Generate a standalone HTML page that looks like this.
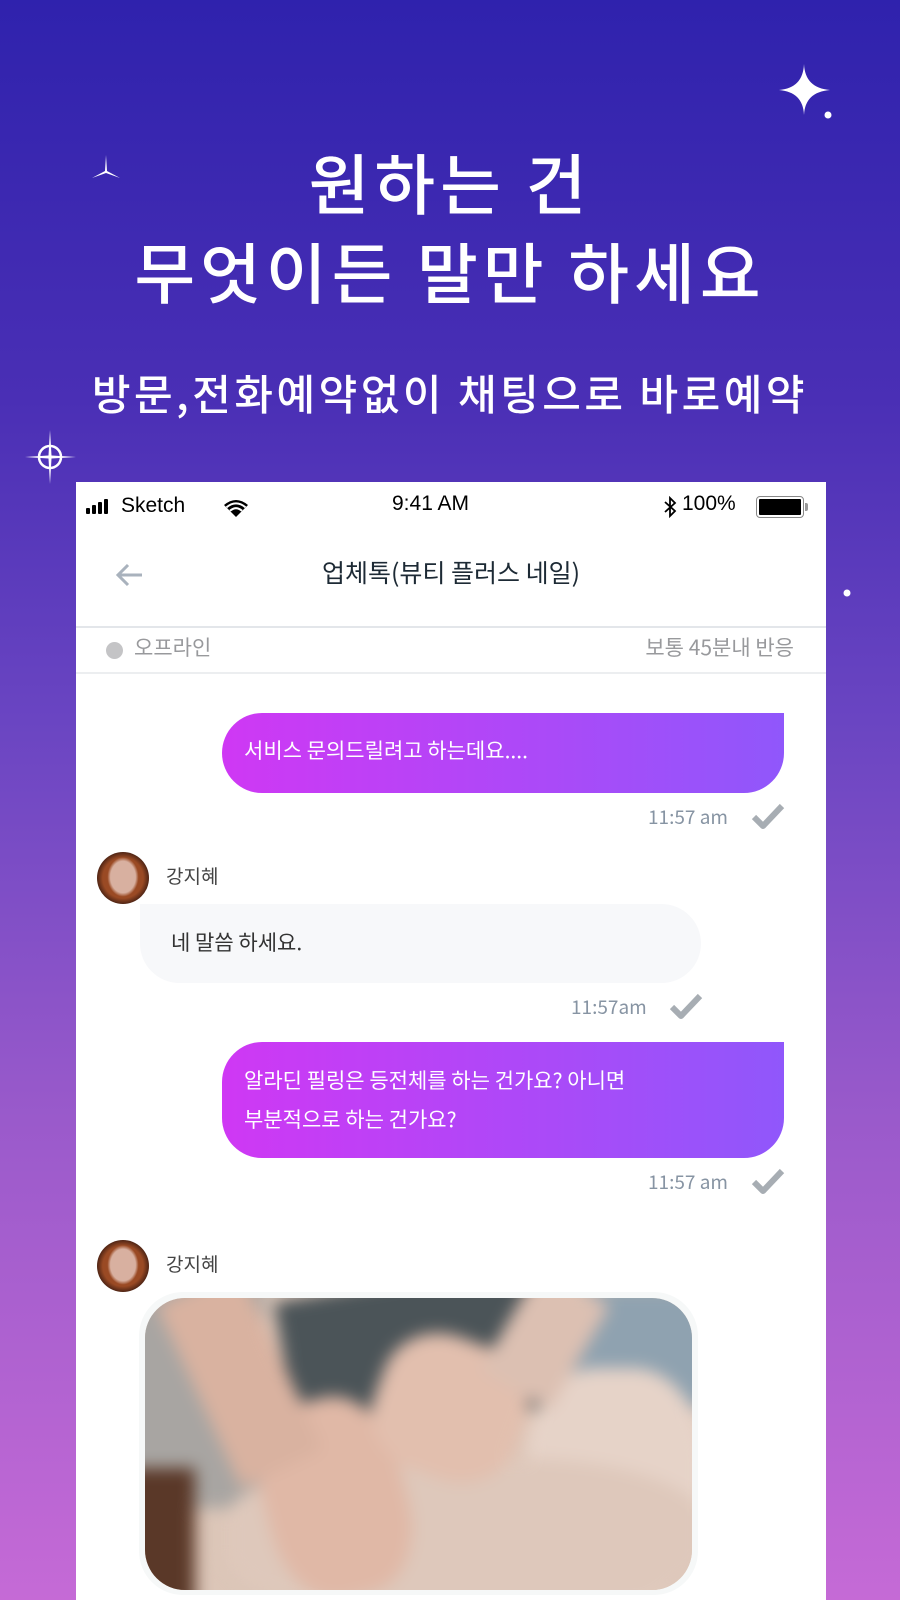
<!DOCTYPE html>
<html><head><meta charset="utf-8">
<style>
*{margin:0;padding:0;box-sizing:border-box}
html,body{width:900px;height:1600px;overflow:hidden}
body{position:relative;font-family:"Liberation Sans","Noto Sans CJK KR",sans-serif}
.bg{position:absolute;left:0;top:0;width:900px;height:1600px;background:linear-gradient(180deg,#2f22ad 0%,#4a2fb5 25%,#6a45c2 45%,#9a5acb 70%,#c56ad6 100%)}
.abs{position:absolute}
.t1{left:0;width:900px;text-align:center;color:#fff;font-family:"Noto Sans CJK KR",sans-serif;font-weight:500;font-size:66px;line-height:1;letter-spacing:5px}
.sub{left:0;width:900px;text-align:center;color:#fff;font-family:"Noto Sans CJK KR",sans-serif;font-weight:500;font-size:42px;line-height:1;letter-spacing:3.5px}
.phone{left:76px;top:482px;width:750px;height:1130px;background:#fff}
.kr{font-family:"Noto Sans CJK KR",sans-serif}
.bub{position:absolute;background:linear-gradient(90deg,#cf38f4,#9057fb);color:#fff;border-radius:40px 0 40px 40px;font-family:"Noto Sans CJK KR",sans-serif;font-size:21px;font-weight:400}
.time{position:absolute;color:#8794a3;font-size:19px;font-family:"Noto Sans CJK KR",sans-serif}
.av{position:absolute;width:52px;height:52px;border-radius:50%;overflow:hidden;background:radial-gradient(ellipse 30% 38% at 50% 48%,#d8b0a0 0 80%,transparent 100%),radial-gradient(ellipse at 50% 50%,#9a4a24 0 55%,#3a1a10 75%),#ccc}
.name{position:absolute;color:#444;font-size:19px;font-family:"Noto Sans CJK KR",sans-serif}
</style></head><body>
<div class="bg"></div>
<svg class="abs" style="left:0;top:0" width="900" height="620">
<path d="M804 64 Q805 88 830 90 Q805 92 804 115 Q803 92 779 90 Q803 88 804 64Z" fill="#fff"/>
<circle cx="828" cy="115" r="3.5" fill="#fff"/>
<path d="M106 155 L107 171 L120 178 L106 173 L92 178 L105 171Z" fill="#fff"/>
<circle cx="50" cy="457" r="11" fill="none" stroke="#fff" stroke-width="2.5"/>
<path d="M50 430 L51.5 455.5 L76 457 L51.5 458.5 L50 484 L48.5 458.5 L25 457 L48.5 455.5Z" fill="#fff"/>
<circle cx="847" cy="593" r="3.5" fill="#fff"/>
</svg>
<div class="abs t1" style="top:148px">원하는 건</div>
<div class="abs t1" style="top:237px">무엇이든 말만 하세요</div>
<div class="abs sub" style="top:372px">방문,전화예약없이 채팅으로 바로예약</div>

<div class="abs phone">
 <div class="abs" style="left:10px;top:17px;display:flex;align-items:flex-end;gap:2px">
  <span style="width:4px;height:6px;background:#000;border-radius:1px"></span>
  <span style="width:4px;height:9px;background:#000;border-radius:1px"></span>
  <span style="width:4px;height:12px;background:#000;border-radius:1px"></span>
  <span style="width:4px;height:15px;background:#000;border-radius:1px"></span>
 </div>
 <div class="abs" style="left:45px;top:12px;font-size:21px;color:#000">Sketch</div>
 <svg class="abs" style="left:146px;top:16px" width="28" height="20" viewBox="0 0 28 20"><path d="M14 19 L2 7 Q14 -3 26 7Z" fill="#000"/><path d="M4.5 9.3 Q14 1.5 23.5 9.3" stroke="#fff" stroke-width="2" fill="none"/><path d="M8 12.8 Q14 7.5 20 12.8" stroke="#fff" stroke-width="2" fill="none"/></svg>
 <div class="abs" style="left:316px;top:10px;font-size:21px;color:#000">9:41 AM</div>
 <svg class="abs" style="left:587px;top:14px" width="14" height="22" viewBox="0 0 14 22"><path d="M2 6 L12 15 L7 20 L7 2 L12 7 L2 16" fill="none" stroke="#000" stroke-width="1.8"/></svg>
 <div class="abs" style="left:606px;top:10px;font-size:21px;color:#000">100%</div>
 <div class="abs" style="left:680px;top:14px;width:48px;height:22px;border:1.5px solid #888;border-radius:4px;padding:2px"><div style="width:100%;height:100%;background:#000;border-radius:1px"></div></div>
 <div class="abs" style="left:729px;top:21px;width:3px;height:8px;background:#999;border-radius:0 2px 2px 0"></div>
 <svg class="abs" style="left:38px;top:80px" width="30" height="26" viewBox="0 0 30 26"><path d="M28 13 H4 M14 3 L4 13 L14 23" fill="none" stroke="#a9b2bd" stroke-width="3"/></svg>
 <div class="abs kr" style="left:0;width:750px;top:72px;text-align:center;font-size:25px;color:#1d2a35">업체톡(뷰티 플러스 네일)</div>
 <div class="abs" style="left:0;top:144px;width:750px;height:2px;background:#e3e6ea"></div>
 <div class="abs" style="left:30px;top:160px;width:17px;height:17px;border-radius:50%;background:#c4c4c6"></div>
 <div class="abs kr" style="left:58px;top:150px;font-size:21px;color:#98999c">오프라인</div>
 <div class="abs kr" style="right:32px;top:150px;font-size:21px;color:#98999c">보통 45분내 반응</div>
 <div class="abs" style="left:0;top:190px;width:750px;height:2px;background:#eceef0"></div>
</div>

<div class="bub" style="left:222px;top:713px;width:562px;height:80px;padding:22px 0 0 22px">서비스 문의드릴려고 하는데요....</div>
<div class="time" style="left:648px;top:803px">11:57 am</div>
<svg class="abs" style="left:751px;top:802px" width="34" height="28" viewBox="0 0 34 28"><path d="M3 15 L12 24 L31 4" fill="none" stroke="#a7adb3" stroke-width="6" stroke-linejoin="round"/></svg>

<div class="av" style="left:97px;top:852px"></div>
<div class="name" style="left:166px;top:862px">강지혜</div>
<div class="abs kr" style="left:140px;top:904px;width:561px;height:79px;background:#f7f8fa;border-radius:0 40px 40px 40px;padding:23px 0 0 31px;font-size:21px;color:#333">네 말씀 하세요.</div>
<div class="time" style="left:571px;top:993px">11:57am</div>
<svg class="abs" style="left:669px;top:992px" width="34" height="28" viewBox="0 0 34 28"><path d="M3 15 L12 24 L31 4" fill="none" stroke="#a7adb3" stroke-width="6" stroke-linejoin="round"/></svg>

<div class="bub" style="left:222px;top:1042px;width:562px;height:116px;padding:19px 0 0 22px;line-height:39px">알라딘 필링은 등전체를 하는 건가요? 아니면<br>부분적으로 하는 건가요?</div>
<div class="time" style="left:648px;top:1168px">11:57 am</div>
<svg class="abs" style="left:751px;top:1167px" width="34" height="28" viewBox="0 0 34 28"><path d="M3 15 L12 24 L31 4" fill="none" stroke="#a7adb3" stroke-width="6" stroke-linejoin="round"/></svg>

<div class="av" style="left:97px;top:1240px"></div>
<div class="name" style="left:166px;top:1250px">강지혜</div>

<div class="abs" style="left:139px;top:1292px;width:559px;height:303px;border-radius:44px;background:#f6f8f8"></div>
<div class="abs" style="left:145px;top:1298px;width:547px;height:292px;border-radius:40px;overflow:hidden;background:#dcc6b8">
 <div class="abs" style="left:0;top:0;width:547px;height:292px;filter:blur(8px)">
  <div class="abs" style="left:-20px;top:-20px;width:140px;height:230px;background:#a8a5a2"></div>
  <div class="abs" style="left:-20px;top:170px;width:70px;height:150px;background:#5a3828"></div>
  <div class="abs" style="left:140px;top:-20px;width:270px;height:150px;background:#4b5458;transform:rotate(-10deg)"></div>
  <div class="abs" style="left:420px;top:-10px;width:150px;height:120px;background:#8fa2b0"></div>
  <div class="abs" style="left:380px;top:70px;width:180px;height:240px;background:#e6d3c8;border-radius:40%"></div>
  <div class="abs" style="left:80px;top:160px;width:480px;height:160px;background:#dec8bb;border-radius:40%"></div>
  <div class="abs" style="left:120px;top:100px;width:140px;height:200px;background:#e0b8a6;border-radius:40%;transform:rotate(-15deg)"></div>
  <div class="abs" style="left:50px;top:-20px;width:90px;height:200px;background:#d9b2a0;transform:rotate(-25deg)"></div>
  <div class="abs" style="left:230px;top:40px;width:150px;height:140px;background:#e2bfae;border-radius:40%;transform:rotate(20deg)"></div>
  <div class="abs" style="left:360px;top:-20px;width:80px;height:120px;background:#dcc0b2;transform:rotate(30deg)"></div>
 </div>
</div>
</body></html>
